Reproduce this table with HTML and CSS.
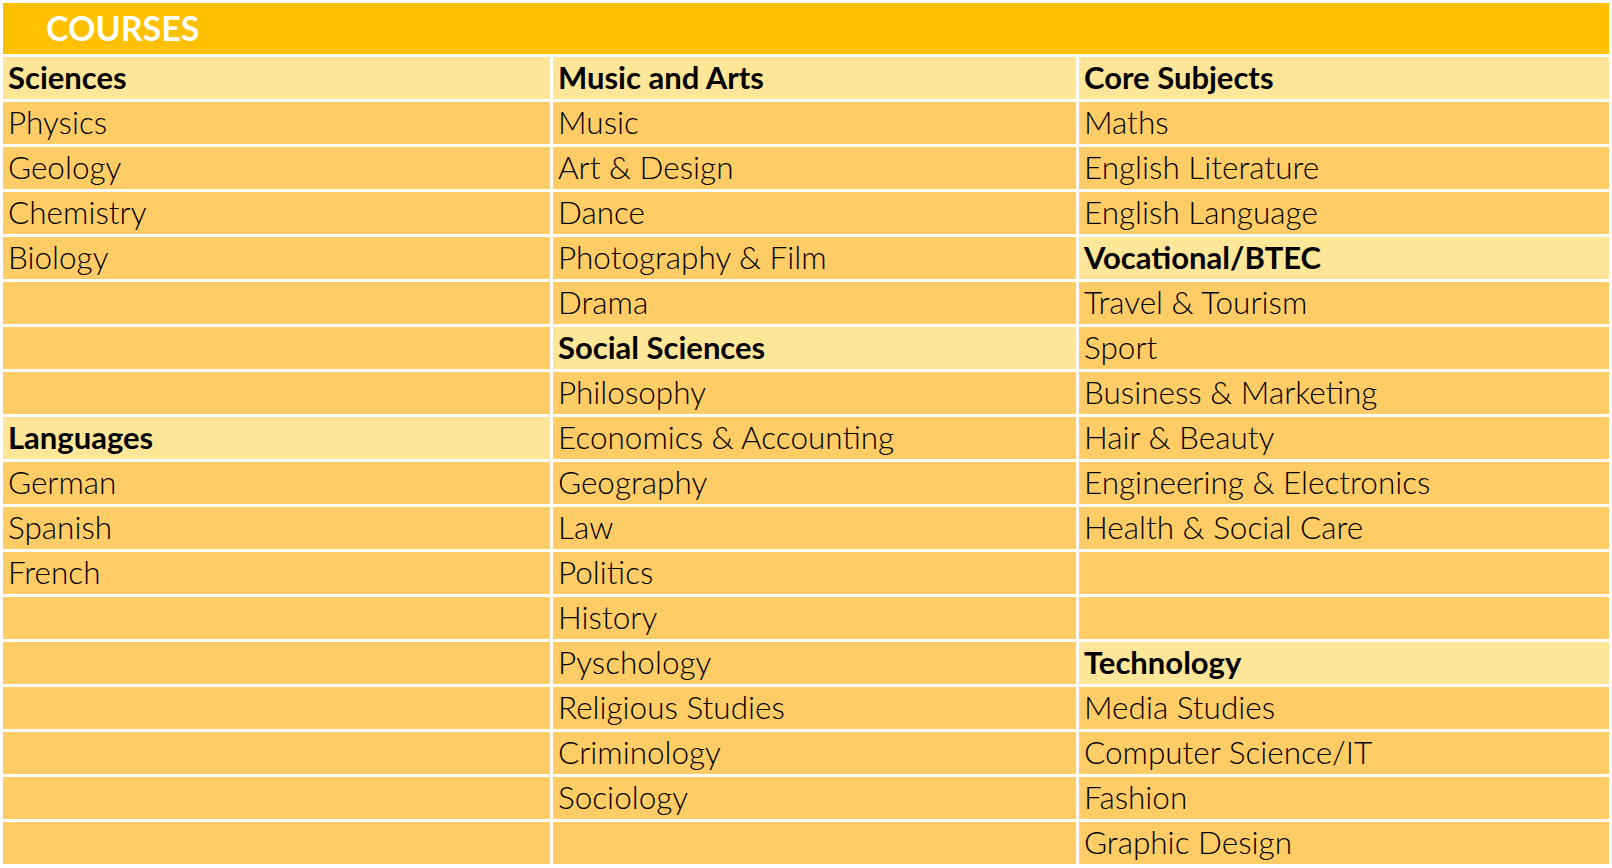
FILE: index.html
```html
<!DOCTYPE html>
<html lang="en">
<head>
<meta charset="utf-8">
<title>Courses</title>
<link rel="stylesheet" href="styles.css">
</head>
<body>
<div class="sheet">
  <div class="title"><span>COURSES</span></div>

  <div class="cell head">Sciences</div>
  <div class="cell head">Music and Arts</div>
  <div class="cell head">Core Subjects</div>

  <div class="cell">Physics</div>
  <div class="cell">Music</div>
  <div class="cell">Maths</div>

  <div class="cell">Geology</div>
  <div class="cell">Art &amp; Design</div>
  <div class="cell">English Literature</div>

  <div class="cell">Chemistry</div>
  <div class="cell">Dance</div>
  <div class="cell">English Language</div>

  <div class="cell">Biology</div>
  <div class="cell">Photography &amp; Film</div>
  <div class="cell head">Vocational/BTEC</div>

  <div class="cell"></div>
  <div class="cell">Drama</div>
  <div class="cell">Travel &amp; Tourism</div>

  <div class="cell"></div>
  <div class="cell head">Social Sciences</div>
  <div class="cell">Sport</div>

  <div class="cell"></div>
  <div class="cell">Philosophy</div>
  <div class="cell">Business &amp; Marketing</div>

  <div class="cell head">Languages</div>
  <div class="cell">Economics &amp; Accounting</div>
  <div class="cell">Hair &amp; Beauty</div>

  <div class="cell">German</div>
  <div class="cell">Geography</div>
  <div class="cell">Engineering &amp; Electronics</div>

  <div class="cell">Spanish</div>
  <div class="cell">Law</div>
  <div class="cell">Health &amp; Social Care</div>

  <div class="cell">French</div>
  <div class="cell">Politics</div>
  <div class="cell"></div>

  <div class="cell"></div>
  <div class="cell">History</div>
  <div class="cell"></div>

  <div class="cell"></div>
  <div class="cell">Pyschology</div>
  <div class="cell head">Technology</div>

  <div class="cell"></div>
  <div class="cell">Religious Studies</div>
  <div class="cell">Media Studies</div>

  <div class="cell"></div>
  <div class="cell">Criminology</div>
  <div class="cell">Computer Science/IT</div>

  <div class="cell"></div>
  <div class="cell">Sociology</div>
  <div class="cell">Fashion</div>

  <div class="cell"></div>
  <div class="cell"></div>
  <div class="cell">Graphic Design</div>
</div>
</body>
</html>
```

FILE: styles.css
```css
html, body {
  margin: 0;
  padding: 0;
  background: #ffffff;
}

body {
  font-family: "Lato", "Open Sans", sans-serif;
  color: #000000;
}

.sheet {
  display: grid;
  grid-template-columns: 547px 523px 530px;
  grid-template-rows: 51px repeat(18, 42px);
  gap: 3px;
  padding: 3px;
  width: 1612px;
  box-sizing: border-box;
}

.title {
  grid-column: 1 / -1;
  background: #ffc000;
  display: flex;
  align-items: center;
  padding: 0 0 1px 43px;
}

.title span {
  color: #ffffff;
  font-weight: 700;
  font-size: 34px;
  line-height: 1;
}

.cell {
  background: #ffcc66;
  display: flex;
  align-items: center;
  padding: 0 0 1px 5px;
  font-size: 31.5px;
  font-weight: 300;
  line-height: 1;
  white-space: nowrap;
  overflow: hidden;
}

.cell.head {
  background: #ffe699;
  font-weight: 700;
  font-size: 31px;
}
```
